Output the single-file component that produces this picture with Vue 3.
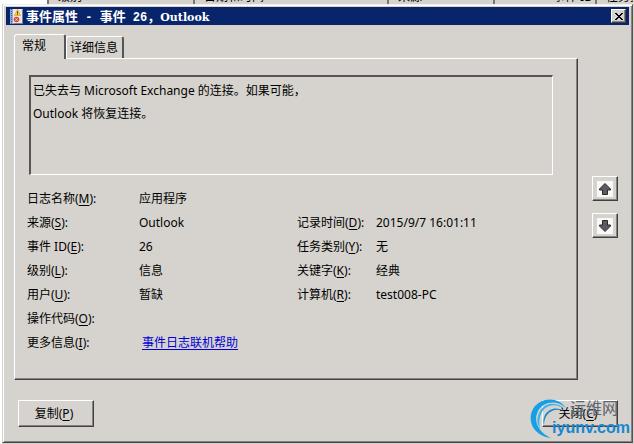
<script setup>
const columns = ['', '级别', '日期和时间', '来源', '事件 ID', '任务类别']

const fields = [
  { label: '日志名称', key: 'M', value: '应用程序', wide: true },
  { label: '来源', key: 'S', value: 'Outlook' },
  { label: '记录时间', key: 'D', value: '2015/9/7 16:01:11' },
  { label: '事件 ID', key: 'E', value: '26' },
  { label: '任务类别', key: 'Y', value: '无' },
  { label: '级别', key: 'L', value: '信息' },
  { label: '关键字', key: 'K', value: '经典' },
  { label: '用户', key: 'U', value: '暂缺' },
  { label: '计算机', key: 'R', value: 'test008-PC' },
  { label: '操作代码', key: 'O', value: '', wide: true },
  { label: '更多信息', key: 'I', value: '事件日志联机帮助', wide: true, link: true }
]

const message = '已失去与 Microsoft Exchange 的连接。如果可能，\nOutlook 将恢复连接。'
</script>

<template>
  <div class="desktop">
    <div class="list-header" aria-hidden="true">
      <span v-for="(name, i) in columns" :key="i">{{ name }}</span>
    </div>

    <main class="dialog">
      <header class="titlebar">
        <svg class="app-icon" width="13" height="15" viewBox="0 0 13 15" aria-hidden="true">
          <rect width="13" height="15" fill="#8da9d4" />
          <rect x="3" width="9" height="14" fill="#f1e6dc" />
          <path d="M1.500 0v15" stroke="#3d5f9c" stroke-dasharray="1 1" />
          <path d="M4 14.500h8.500V1" fill="none" stroke="#6d7f9e" />
          <path d="M7.500 .5 10.500 6.500h-6z" fill="#f3cf3a" stroke="#c79a22" stroke-width=".6" />
          <path d="M7.500 2.500v2M7.500 5.200v.8" stroke="#443000" />
          <circle cx="6.500" cy="10.500" r="2.800" fill="#cf4a3c" />
          <path d="m5.400 9.400 2.200 2.200m0-2.200-2.200 2.200" stroke="#fff" stroke-width=".8" />
        </svg>
        <h1>事件属性<span class="mono"> - </span>事件<span class="mono"> 26</span>，<span class="name">Outlook</span></h1>
        <button class="close-x" type="button" aria-label="关闭窗口">
          <svg width="8" height="7" viewBox="0 0 8 7" shape-rendering="crispEdges" aria-hidden="true">
            <path d="M0 0h2v1h1v1h2V1h1V0h2v1H7v1H6v1H5v1h1v1h1v1h1v1H6V6H5V5H3v1H2v1H0V6h1V5h1V4h1V3H2V2H1V1H0z" fill="#000" />
          </svg>
        </button>
      </header>

      <div class="content">
        <div class="tabs" role="tablist">
          <button class="tab active" type="button" role="tab" aria-selected="true">常规</button>
          <button class="tab" type="button" role="tab" aria-selected="false">详细信息</button>
        </div>

        <div class="middle">
          <section class="panel" role="tabpanel">
            <textarea class="message" readonly aria-label="事件描述" :value="message"></textarea>
            <dl class="fields">
              <template v-for="field in fields" :key="field.key">
                <dt>{{ field.label }}(<u>{{ field.key }}</u>):</dt>
                <dd :class="{ wide: field.wide }">
                  <a v-if="field.link" href="#help">{{ field.value }}</a>
                  <template v-else>{{ field.value }}</template>
                </dd>
              </template>
            </dl>
          </section>

          <nav class="stepper">
            <button class="raised step" type="button" aria-label="上一个事件">
              <svg width="16" height="16" viewBox="0 0 16 16" aria-hidden="true">
                <rect width="16" height="16" fill="#f8f8f8" />
                <path d="M8 2.500 13.500 8v1H10.500v4.500h-5V9H2.500V8z" fill="#5c5c60" stroke="#29292c" />
              </svg>
            </button>
            <button class="raised step" type="button" aria-label="下一个事件">
              <svg width="16" height="16" viewBox="0 0 16 16" aria-hidden="true">
                <rect width="16" height="16" fill="#f8f8f8" />
                <path d="M8 13.500 13.500 8V7H10.500V2.500h-5V7H2.500v1z" fill="#5c5c60" stroke="#29292c" />
              </svg>
            </button>
          </nav>
        </div>

        <footer class="actions">
          <button class="raised command" type="button">复制(<u>P</u>)</button>
          <button class="raised command" type="button">关闭(<u>C</u>)</button>
        </footer>
      </div>
    </main>

    <div class="watermark">
      <svg class="swirl" width="40" height="42" viewBox="0 0 40 42" aria-hidden="true">
        <path d="M36 10C28-2 10-1 3 11-4 24 5 38 21 40 8 34 3 23 8 13 13 4 26 1 36 10z" fill="#169fe4" />
        <path d="M36 12C28 3 15 4 10 13c-4 7-3 13 0 18-1-6-1-12 2-17C17 6 27 5 36 12z" fill="#3cb4ec" />
        <path d="M35 14c-7-6-16-4-20 3-2 4-2 7-1 10 0-4 1-7 3-10 4-5 11-7 18-3z" fill="#1c86c8" />
      </svg>
      <span class="brand">运维网</span>
      <span class="domain">iyunv.com</span>
    </div>
  </div>
</template>

<style>
body {
  margin: 0;
  background: #d6d3ce;
}
</style>

<style scoped>
* {
  box-sizing: border-box;
}

.desktop {
  position: relative;
  display: flex;
  flex-direction: column;
  min-height: 100vh;
  padding: 0 1px 1px 2px;
  background: linear-gradient(90deg, #fff 2px, #d6d3ce 2px);
  color: #000;
  font: 12px/24px "Noto Sans", "Noto Sans CJK SC", sans-serif;
}

.list-header {
  display: grid;
  grid-template-columns: 47px 146px 194px 106px 102px 1fr;
  grid-template-rows: 4px;
  align-items: end;
  height: 4px;
  overflow: hidden;
  background: #d6d3ce;
  line-height: 14px;
  white-space: nowrap;
}

.list-header span {
  padding-left: 9px;
  border-right: 2px solid #777;
}

.list-header span:first-child {
  height: 14px;
  background: #fff;
}

.list-header span:nth-child(5) {
  padding-left: 58px;
}

.dialog {
  display: flex;
  flex: 1;
  flex-direction: column;
  padding: 1px;
  border: 1px solid;
  border-color: #f0eff0 #555 #444 #d6d3ce;
  box-shadow: inset 1px 1px #fff, inset -1px -1px #848284;
  background: #d6d3ce;
}

.titlebar {
  display: flex;
  align-items: center;
  height: 18px;
  margin: 1px 2px 0;
  padding: 0 3px 0 4px;
  background: #08246b;
}

h1 {
  flex: 1;
  margin: 0 0 0 3px;
  padding-top: 1px;
  color: #fff;
  font: bold 13px/17px "Noto Sans CJK SC", sans-serif;
  white-space: pre;
}

.mono {
  font-family: "Liberation Mono", monospace;
  font-size: 12px;
}

.name {
  font-family: "DejaVu Serif", serif;
  font-size: 11px;
}

button {
  padding: 0;
  color: #000;
  font: inherit;
}

.close-x,
.raised {
  display: flex;
  align-items: center;
  justify-content: center;
  border: 1px solid;
  border-color: #fff #424142 #424142 #fff;
  border-radius: 0;
  background: #d6d3ce;
  box-shadow: inset -1px -1px #848284;
}

.close-x {
  width: 15px;
  height: 14px;
}

.content {
  display: flex;
  flex: 1;
  flex-direction: column;
  padding: 9px 13px 14px 10px;
}

.tabs {
  display: flex;
  align-items: flex-end;
  height: 24px;
}

.tab {
  height: 22px;
  padding: 0 4px 0 3px;
  border: solid;
  border-width: 1px 2px 0 1px;
  border-color: #fff #555 #fff #fff;
  border-radius: 3px 3px 0 0;
  background: #d6d3ce;
  line-height: 20px;
}

.tab.active {
  position: relative;
  z-index: 1;
  height: 25px;
  margin-bottom: -1px;
  padding: 0 18px 3px 7px;
}

.middle {
  display: flex;
  flex: 1;
}

.panel {
  flex: 1;
  padding: 16px 24px 24px 12px;
  border: 1px solid;
  border-color: #fff #424142 #424142 #fff;
  box-shadow: inset -1px -1px #848284;
}

.message {
  display: block;
  width: calc(100% - 2px);
  height: 100px;
  margin: 0 0 12px 2px;
  padding: 2px;
  overflow: hidden;
  border: solid;
  border-width: 2px 1px 1px 2px;
  border-color: #555 #fff #fff #555;
  border-radius: 0;
  outline: 0;
  background: #d6d3ce;
  color: #000;
  font: inherit;
  line-height: 23px;
  resize: none;
}

.fields {
  display: grid;
  grid-template-columns: 112px 158px 79px 1fr;
  grid-auto-rows: 24px;
  margin: 0;
  white-space: nowrap;
}

dd {
  margin: 0;
}

dd.wide {
  grid-column: 2 / -1;
}

a {
  margin-left: 3px;
  color: #0000d6;
}

u,
a {
  text-underline-offset: 2px;
}

.stepper {
  display: flex;
  flex-direction: column;
  gap: 12px;
  padding: 118px 0 0 14px;
}

.step {
  width: 26px;
  height: 25px;
}

.actions {
  display: flex;
  justify-content: space-between;
  margin-top: 20px;
  padding-left: 4px;
}

.command {
  width: 76px;
  height: 27px;
  padding-right: 4px;
}

.watermark {
  position: absolute;
  right: 4px;
  bottom: 6px;
  display: grid;
  grid-template: 20px 20px / 40px 60px;
  line-height: 20px;
  white-space: nowrap;
  pointer-events: none;
}

.swirl {
  grid-area: 1 / 1 / 3 / 2;
}

.brand {
  color: #5d6670;
  font-size: 16px;
}

.domain {
  grid-area: 2 / 1 / 3 / 3;
  justify-self: end;
  color: #1688cf;
  font: bold 16px/20px "Liberation Sans", sans-serif;
}
</style>
